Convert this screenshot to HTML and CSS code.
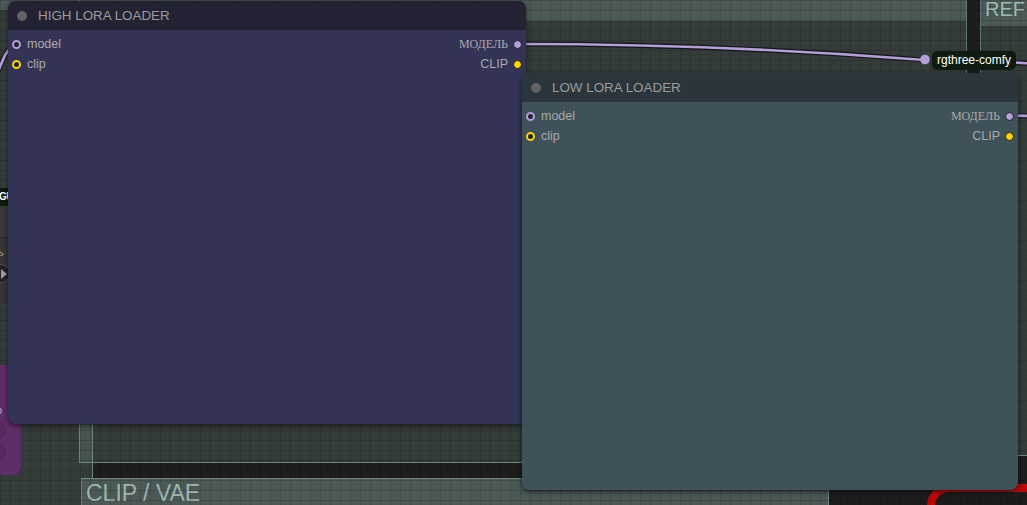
FILE: index.html
```html
<!DOCTYPE html>
<html>
<head>
<meta charset="utf-8">
<link rel="stylesheet" href="styles.css">
</head>
<body>
<div class="canvas">
  <div class="grp grp-left"><div class="grp-head grp-head-left"></div></div>
  <div class="grp grp-top"><div class="grp-head grp-head-top"></div></div>
  <div class="strip"></div>
  <div class="vline"></div>
  <div class="grp grp-ref"><div class="grp-head grp-head-ref">REF</div></div>
  <div class="grp grp-clip"><div class="clip-title">CLIP / VAE</div></div>
  <div class="red-node"></div>
  <div class="grid"></div>

  <div class="peek-badge">GUF</div>
  <div class="peek-grey">
    <div class="peek-grey-title"></div>
    <div class="peek-grey-label">ль</div>
    <div class="peek-combo"><span class="peek-arrow"></span></div>
  </div>
  <div class="peek-purple">
    <div class="peek-purple-label">o</div>
    <div class="peek-pill"></div>
    <div class="peek-pill"></div>
  </div>

  <svg class="links" width="1027" height="505" viewBox="0 0 1027 505">
    <g fill="none" stroke-linecap="round">
      <path d="M -8 86 L 2 62 Q 7 48 17 44" stroke="#161616" stroke-width="5"/>
      <path d="M -8 86 L 2 62 Q 7 48 17 44" stroke="#b39ddb" stroke-width="2.6"/>
      <path d="M 517 44 Q 720 44 925 60" stroke="#141614" stroke-width="5"/>
      <path d="M 517 44 Q 720 44 925 60" stroke="#b39ddb" stroke-width="2.6"/>
      <path d="M 1014 62.5 L 1030 63.5" stroke="#141614" stroke-width="5"/>
      <path d="M 1014 62.5 L 1030 63.5" stroke="#b39ddb" stroke-width="2.6"/>
      <path d="M 1012 115.5 L 1030 116" stroke="#141614" stroke-width="5"/>
      <path d="M 1012 115.5 L 1030 116" stroke="#b39ddb" stroke-width="2.6"/>
    </g>
    <circle cx="925" cy="59.5" r="4.8" fill="#b39ddb"/>
  </svg>

  <div class="node node-high">
    <div class="node-title title-high"><span class="title-dot"></span><span>HIGH LORA LOADER</span></div>
    <div class="node-body">
      <div class="row">
        <div class="slot-in"><span class="ring ring-model"></span><span>model</span></div>
        <div class="slot-out"><span class="cyr">МОДЕЛЬ</span><span class="fill fill-model"></span></div>
      </div>
      <div class="row">
        <div class="slot-in"><span class="ring ring-clip"></span><span>clip</span></div>
        <div class="slot-out"><span>CLIP</span><span class="fill fill-clip"></span></div>
      </div>
    </div>
  </div>

  <div class="node node-low">
    <div class="node-title title-low"><span class="title-dot"></span><span>LOW LORA LOADER</span></div>
    <div class="node-body">
      <div class="row">
        <div class="slot-in"><span class="ring ring-model"></span><span>model</span></div>
        <div class="slot-out"><span class="cyr">МОДЕЛЬ</span><span class="fill fill-model"></span></div>
      </div>
      <div class="row">
        <div class="slot-in"><span class="ring ring-clip"></span><span>clip</span></div>
        <div class="slot-out"><span>CLIP</span><span class="fill fill-clip"></span></div>
      </div>
    </div>
  </div>

  <div class="badge">rgthree-comfy</div>
</div>
</body>
</html>
```

FILE: styles.css
```css
html, body {
  margin: 0;
  padding: 0;
  background: #1d1d1d;
}

.canvas {
  position: relative;
  width: 1027px;
  height: 505px;
  overflow: hidden;
  background: #1d1d1d;
  font-family: "Liberation Sans", Arial, sans-serif;
}

/* ---------- groups ---------- */
.grp {
  position: absolute;
  box-sizing: border-box;
  background: #343c3a;
}

.grp-head {
  background: #4a5956;
}

.grp-left {
  left: 0;
  top: 0;
  width: 92px;
  height: 505px;
}

.grp-head-left {
  height: 10px;
}

.grp-top {
  left: 79px;
  top: 0;
  width: 888px;
  height: 463px;
  border-left: 1px solid #6a8883;
  border-right: 1px solid #5f7b76;
  border-bottom: 1px solid #6a8883;
}

.grp-head-top {
  height: 21px;
}

.strip {
  position: absolute;
  left: 80px;
  top: 21px;
  width: 12px;
  height: 441px;
  background: #465450;
}

.vline {
  position: absolute;
  left: 92px;
  top: 21px;
  width: 1px;
  height: 484px;
  background: #6a8883;
}

.grp-ref {
  left: 980px;
  top: 0;
  width: 70px;
  height: 456px;
  border-left: 1px solid #6a8883;
  border-bottom: 1px solid #6a8883;
}

.grp-head-ref {
  height: 26px;
  padding-left: 4px;
  font-size: 20px;
  line-height: 19px;
  color: #9dbab3;
}

.grp-clip {
  left: 81px;
  top: 478px;
  width: 748px;
  height: 40px;
  background: #4a5956;
  border: 1px solid #6a8883;
}

.clip-title {
  padding: 3px 0 0 4px;
  font-size: 23px;
  line-height: 23px;
  color: #9bb7b1;
}

.red-node {
  position: absolute;
  left: 927px;
  top: 484px;
  width: 160px;
  height: 70px;
  box-sizing: border-box;
  border: 8px solid #c40606;
  border-radius: 22px;
  background: #1c1c1c;
}

.grid {
  position: absolute;
  inset: 0;
  background-image:
    linear-gradient(to right, rgba(0, 0, 0, 0.13) 1px, transparent 1px),
    linear-gradient(to bottom, rgba(0, 0, 0, 0.13) 1px, transparent 1px);
  background-size: 10px 10px;
  pointer-events: none;
}

/* ---------- nodes peeking from the left ---------- */
.peek-badge {
  position: absolute;
  left: -40px;
  top: 188px;
  width: 70px;
  height: 18px;
  box-sizing: border-box;
  padding-left: 39px;
  background: #0e1c0f;
  border-radius: 4px;
  color: #ffffff;
  font-size: 10px;
  font-weight: bold;
  letter-spacing: -0.5px;
  line-height: 18px;
}

.peek-grey {
  position: absolute;
  left: -100px;
  top: 207px;
  width: 130px;
  height: 97px;
  background: #353535;
  border-radius: 6px;
}

.peek-grey-title {
  height: 30px;
  background: #393939;
  border-bottom: 1px solid #2c2c2c;
}

.peek-grey-label {
  position: absolute;
  left: 92px;
  top: 38px;
  font-family: "Liberation Serif", "Times New Roman", serif;
  font-size: 12px;
  color: #aaaaaa;
}

.peek-combo {
  position: absolute;
  left: 40px;
  top: 57px;
  width: 70px;
  height: 19px;
  box-sizing: border-box;
  background: #222222;
  border: 1px solid #4a4a4a;
  border-radius: 9px;
}

.peek-arrow {
  position: absolute;
  left: 60px;
  top: 4px;
  width: 0;
  height: 0;
  border-top: 5px solid transparent;
  border-bottom: 5px solid transparent;
  border-left: 6px solid #9a9a9a;
}

.peek-purple {
  position: absolute;
  left: -100px;
  top: 365px;
  width: 121px;
  height: 110px;
  background: #5e2c67;
  border-radius: 8px;
}

.peek-purple-label {
  position: absolute;
  left: 96px;
  top: 39px;
  font-size: 11px;
  color: #c9b8cc;
}

.peek-pill {
  position: absolute;
  left: 40px;
  width: 66px;
  height: 16px;
  box-sizing: border-box;
  background: #58295f;
  border: 1px solid #4e2355;
  border-radius: 8px;
}

.peek-pill:nth-of-type(2) {
  top: 57px;
}

.peek-pill:nth-of-type(3) {
  top: 80px;
}

/* ---------- links ---------- */
.links {
  position: absolute;
  left: 0;
  top: 0;
}

/* ---------- nodes ---------- */
.node {
  position: absolute;
  display: flex;
  flex-direction: column;
  border-radius: 8px;
  box-shadow: 0 2px 5px rgba(0, 0, 0, 0.55);
}

.node-high {
  left: 8px;
  top: 1px;
  width: 518px;
  height: 423px;
  background: #333355;
}

.node-low {
  left: 522px;
  top: 73px;
  width: 496px;
  height: 417px;
  background: #3f5159;
}

.node-title {
  display: flex;
  align-items: center;
  gap: 11px;
  height: 29px;
  padding-left: 9px;
  border-radius: 8px 8px 0 0;
  font-size: 13.4px;
  color: #9c9c9c;
}

.title-high {
  background: #222233;
}

.title-low {
  background: #2a363b;
}

.title-dot {
  width: 10px;
  height: 10px;
  border-radius: 50%;
  background: #626262;
}

.node-body {
  padding-top: 4px;
}

.row {
  display: flex;
  justify-content: space-between;
  align-items: center;
  height: 20px;
  padding: 0 4px;
  font-size: 12.5px;
  color: #aaaaaa;
}

.slot-in,
.slot-out {
  display: flex;
  align-items: center;
}

.slot-in {
  gap: 6px;
}

.slot-out {
  gap: 5px;
}

.cyr {
  font-family: "Liberation Serif", "Times New Roman", serif;
  font-size: 12px;
}

.ring {
  width: 9px;
  height: 9px;
  box-sizing: border-box;
  border-radius: 50%;
  border: 2.5px solid;
  background: #262630;
}

.ring-model {
  border-color: #b39ddb;
}

.ring-clip {
  border-color: #ffd500;
}

.fill {
  width: 9px;
  height: 9px;
  box-sizing: border-box;
  border-radius: 50%;
  border: 1px solid #1b1b22;
}

.fill-model {
  background: #b39ddb;
}

.fill-clip {
  background: #ffd500;
}

/* ---------- reroute badge ---------- */
.badge {
  position: absolute;
  left: 932px;
  top: 51px;
  height: 19px;
  padding: 0 5px;
  background: #0e1c0f;
  border-radius: 5px;
  color: #ffffff;
  font-size: 12px;
  line-height: 19px;
}
```
